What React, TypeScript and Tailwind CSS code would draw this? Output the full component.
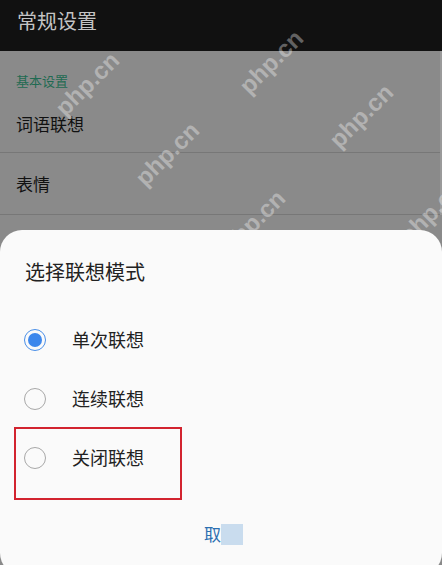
import { useState } from "react";

const options = ["单次联想", "连续联想", "关闭联想"];

const marks = [
  { left: 48, top: 66 },
  { left: 128, top: 136 },
  { left: 232, top: 44 },
  { left: 322, top: 98 },
  { left: 214, top: 204 },
  { left: 392, top: 194 },
];

export default function App() {
  const [selected] = useState(0);

  return (
    <div
      className="relative w-[442px] h-[565px] overflow-hidden bg-[#8a8a8a]"
      style={{ fontFamily: '"Noto Sans CJK SC", "Noto Sans", sans-serif' }}
    >
      {/* Toolbar */}
      <div className="h-[51px] bg-[#111111] flex items-start pt-[7px] px-[17px]">
        <span className="text-[20px] leading-[28px] text-[#c4c4c4]">常规设置</span>
      </div>

      {/* Settings list behind dim */}
      <div className="border-r-2 border-[#9a9a9a]">
        <div className="px-[16px] pt-[20px] text-[13px] leading-[20px] text-[#1f6a52]">
          基本设置
        </div>
        <div className="h-[62px] flex items-center px-[16px] pt-[4px] border-b border-[#777777] text-[17px] text-[#111111]">
          词语联想
        </div>
        <div className="h-[62px] flex items-center px-[16px] border-b border-[#777777] text-[17px] text-[#111111]">
          表情
        </div>
      </div>

      {/* Watermarks */}
      {marks.map((m, i) => (
        <span
          key={i}
          className="absolute text-[24px] font-bold text-white/35 -rotate-45 select-none pointer-events-none"
          style={{ left: m.left, top: m.top, fontFamily: '"Liberation Sans", sans-serif' }}
        >
          php.cn
        </span>
      ))}

      {/* Bottom dialog */}
      <div className="absolute left-0 right-0 top-[230px] h-[345px] bg-[#fafafa] rounded-[22px]">
        <div className="pl-[25px] pt-[28px] text-[20px] leading-[28px] text-[#222222]">
          选择联想模式
        </div>
        <div className="mt-[24px] flex flex-col">
          {options.map((opt, i) => (
            <div key={opt} className="h-[59px] flex items-center pl-[24px]">
              <span
                className={`w-[22px] h-[22px] rounded-full border flex items-center justify-center ${
                  i === selected ? "border-[#4a8fe8]" : "border-[#a8a8a8]"
                }`}
              >
                {i === selected && <span className="w-[14px] h-[14px] rounded-full bg-[#3c87ec]" />}
              </span>
              <span className="ml-[26px] text-[18px] text-[#222222]">{opt}</span>
            </div>
          ))}
        </div>
        <div className="mt-[36px] pl-[204px] flex items-center">
          <span className="text-[17px] text-[#2c6fb1] leading-[22px]">取</span>
          <span className="w-[22px] h-[21px] bg-[#c9dcee]" />
        </div>
      </div>

      {/* Highlight box */}
      <div className="absolute left-[14px] top-[427px] w-[168px] h-[73px] border-2 border-[#d2232f]" />
    </div>
  );
}
